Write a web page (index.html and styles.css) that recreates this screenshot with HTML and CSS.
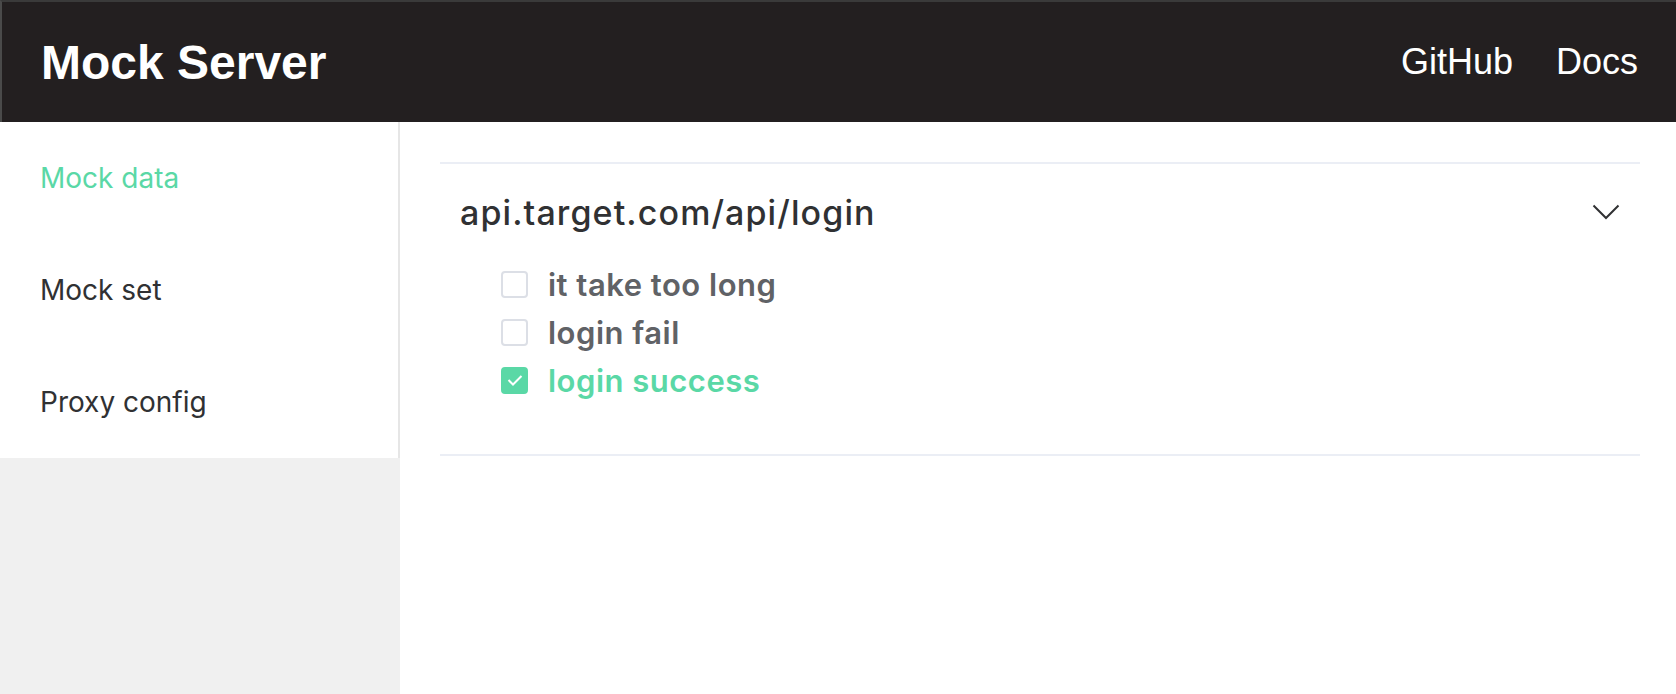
FILE: index.html
```html
<!DOCTYPE html>
<html>
<head>
<meta charset="utf-8">
<link rel="stylesheet" href="styles.css">
</head>
<body>
<header class="topbar">
  <div class="brand">Mock Server</div>
  <nav class="topnav">
    <a class="topnav-link">GitHub</a>
    <a class="topnav-link">Docs</a>
  </nav>
</header>
<div class="main">
  <aside class="sidebar">
    <ul class="menu">
      <li class="menu-item active">Mock data</li>
      <li class="menu-item">Mock set</li>
      <li class="menu-item">Proxy config</li>
    </ul>
    <div class="sidebar-fill"></div>
  </aside>
  <section class="content">
    <div class="collapse">
      <div class="collapse-item">
        <div class="collapse-header">
          <span class="collapse-title">api.target.com/api/login</span>
          <svg class="chevron" width="28" height="16" viewBox="0 0 28 16"><polyline points="1.5,1.5 14,14 26.5,1.5" fill="none" stroke="#303133" stroke-width="2"/></svg>
        </div>
        <div class="collapse-body">
          <label class="check-row">
            <span class="check-box"></span>
            <span class="check-label">it take too long</span>
          </label>
          <label class="check-row">
            <span class="check-box"></span>
            <span class="check-label">login fail</span>
          </label>
          <label class="check-row checked">
            <span class="check-box"><svg width="18" height="14" viewBox="0 0 18 14"><polyline points="2.5,7 7,11.5 15.5,3" fill="none" stroke="#fff" stroke-width="2"/></svg></span>
            <span class="check-label">login success</span>
          </label>
        </div>
      </div>
    </div>
  </section>
</div>
</body>
</html>
```

FILE: styles.css
```css
html, body {
  margin: 0;
  padding: 0;
  height: 100%;
}
body {
  font-family: "Liberation Sans", Arial, sans-serif;
  background: #fff;
  display: flex;
  flex-direction: column;
}
.topbar {
  height: 120px;
  flex: 0 0 auto;
  background: #231f20;
  border-top: 2px solid #3a3a3a;
  border-left: 2px solid #4a4a4a;
  display: flex;
  align-items: center;
  justify-content: space-between;
  padding: 0 38px 0 39px;
  box-sizing: content-box;
}
.brand {
  color: #fff;
  font-size: 48px;
  font-weight: bold;
}
.topnav {
  display: flex;
  gap: 43px;
}
.topnav-link {
  color: #fff;
  font-size: 36px;
}
.main {
  flex: 1;
  display: flex;
}
.sidebar {
  width: 400px;
  flex: 0 0 400px;
  display: flex;
  flex-direction: column;
}
.menu {
  list-style: none;
  margin: 0;
  padding: 0;
  background: #fff;
  border-right: 2px solid #e6e6e6;
}
.menu-item {
  height: 112px;
  display: flex;
  align-items: center;
  padding-left: 40px;
  font-family: Inter, "Liberation Sans", sans-serif;
  font-size: 28px;
  color: #303133;
}
.menu-item.active {
  color: #5ad8a6;
}
.sidebar-fill {
  flex: 1;
  background: #f0f0f0;
}
.content {
  flex: 1;
  padding: 40px 36px 0 40px;
}
.collapse {
  border-top: 2px solid #ebeef5;
  border-bottom: 2px solid #ebeef5;
}
.collapse-header {
  height: 96px;
  display: flex;
  align-items: center;
  justify-content: space-between;
  padding: 0 20px 0 20px;
}
.collapse-title {
  font-family: Inter, "Liberation Sans", sans-serif;
  font-size: 34px;
  font-weight: 500;
  letter-spacing: 1.1px;
  color: #303133;
}
.collapse-body {
  padding: 0 0 50px 61px;
  display: flex;
  flex-direction: column;
}
.check-row {
  height: 48px;
  display: flex;
  align-items: center;
  gap: 20px;
}
.check-box {
  width: 27px;
  height: 27px;
  box-sizing: border-box;
  border: 2px solid #dcdfe6;
  border-radius: 4px;
  background: #fff;
  display: flex;
  align-items: center;
  justify-content: center;
}
.check-label {
  font-family: Inter, "Liberation Sans", sans-serif;
  font-size: 31px;
  font-weight: 600;
  letter-spacing: 0.5px;
  color: #606266;
}
.check-row.checked .check-box {
  background: #5ad8a6;
  border-color: #5ad8a6;
}
.check-row.checked .check-label {
  color: #5ad8a6;
}
```
